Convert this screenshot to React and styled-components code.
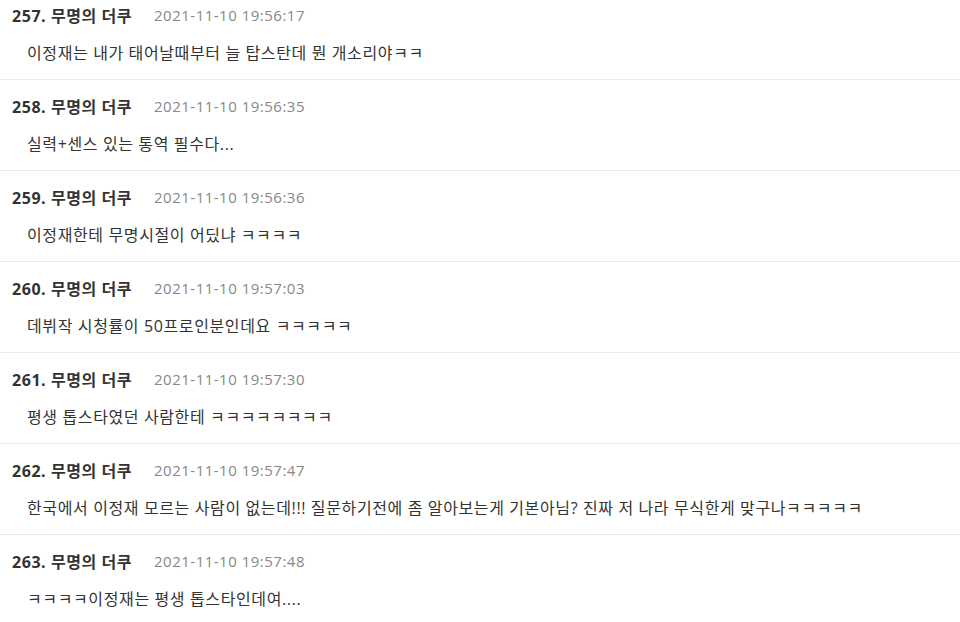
import React from "react";
import styled, { createGlobalStyle } from "styled-components";

const GlobalStyle = createGlobalStyle`
  html, body {
    margin: 0;
    padding: 0;
    background: #fff;
    overflow: hidden;
  }
  body {
    font-family: "Open Sans", "Noto Sans CJK KR", sans-serif;
  }
`;

const List = styled.ul`
  list-style: none;
  margin: -11px 0 0 0;
  padding: 0;
  width: 960px;
`;

const Item = styled.li`
  padding: 15px 12px 15px 12px;
  border-bottom: 1px solid #ebebeb;
`;

const Header = styled.div`
  display: flex;
  align-items: center;
  height: 22px;
  gap: 22px;
`;

const Name = styled.span`
  font-size: 16px;
  font-weight: 700;
  color: #333;
  letter-spacing: 0.55px;
`;

const Date = styled.span`
  font-size: 15px;
  color: #888;
  letter-spacing: 0.5px;
`;

const Body = styled.p`
  margin: 16px 0 0 15px;
  height: 22px;
  line-height: 22px;
  font-size: 16px;
  color: #333;
  letter-spacing: 0.62px;
`;

const comments = [
  { no: 257, date: "2021-11-10 19:56:17", text: "이정재는 내가 태어날때부터 늘 탑스탄데 뭔 개소리야ㅋㅋ" },
  { no: 258, date: "2021-11-10 19:56:35", text: "실력+센스 있는 통역 필수다..." },
  { no: 259, date: "2021-11-10 19:56:36", text: "이정재한테 무명시절이 어딨냐 ㅋㅋㅋㅋ" },
  { no: 260, date: "2021-11-10 19:57:03", text: "데뷔작 시청률이 50프로인분인데요 ㅋㅋㅋㅋㅋ" },
  { no: 261, date: "2021-11-10 19:57:30", text: "평생 톱스타였던 사람한테 ㅋㅋㅋㅋㅋㅋㅋㅋ" },
  { no: 262, date: "2021-11-10 19:57:47", text: "한국에서 이정재 모르는 사람이 없는데!!! 질문하기전에 좀 알아보는게 기본아님? 진짜 저 나라 무식한게 맞구나ㅋㅋㅋㅋㅋ" },
  { no: 263, date: "2021-11-10 19:57:48", text: "ㅋㅋㅋㅋ이정재는 평생 톱스타인데여...." },
];

export default function App() {
  return (
    <>
      <GlobalStyle />
      <List>
        {comments.map((c) => (
          <Item key={c.no}>
            <Header>
              <Name>{c.no}. 무명의 더쿠</Name>
              <Date>{c.date}</Date>
            </Header>
            <Body>{c.text}</Body>
          </Item>
        ))}
      </List>
    </>
  );
}
